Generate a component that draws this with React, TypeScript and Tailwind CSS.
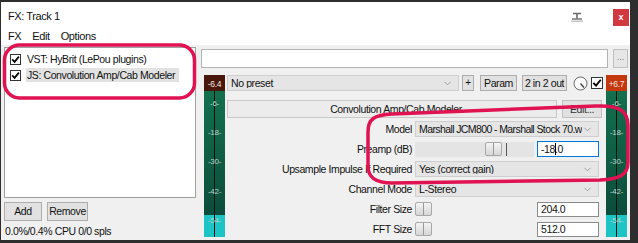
import { ChevronDown } from 'lucide-react';

const RED = '#e01252';

function CheckBox({ size = 11 }: { size?: number }) {
  return (
    <span
      className="shrink-0 border border-[#333] bg-white flex items-center justify-center"
      style={{ width: size, height: size }}
    >
      <svg width={size - 2} height={size - 2} viewBox="0 0 9 9">
        <path d="M1.2 4.4 L3.6 6.9 L7.9 1.6" stroke="#000" strokeWidth="1.7" fill="none" />
      </svg>
    </span>
  );
}

function Meter({ id, peak, peakColor }: { id: string; peak: string; peakColor: string }) {
  const ticks: [string, number][] = [
    ['-6-', 28],
    ['-18-', 57],
    ['-30-', 86],
    ['-42-', 116],
    ['-54-', 145],
  ];
  return (
    <svg width="21" height="162" className="block shrink-0">
      <defs>
        <linearGradient id={id} x1="0" y1="0" x2="0" y2="1">
          <stop offset="0" stopColor="#13704e" />
          <stop offset="1" stopColor="#0b4638" />
        </linearGradient>
      </defs>
      <rect x="0" y="16" width="21" height="146" fill={`url(#${id})`} />
      <rect x="0" y="140" width="21" height="22" fill="#1cc4c6" />
      <line x1="10.5" x2="10.5" y1="16" y2="162" stroke="#06140f" strokeWidth="1" />
      {ticks.map(([t, y]) => (
        <text
          key={t}
          x="10.5"
          y={y + 3}
          fontSize="8"
          textAnchor="middle"
          fill="#b9d4c7"
          letterSpacing="-0.3"
          fontFamily="'Liberation Sans',sans-serif"
        >
          {t}
        </text>
      ))}
      <rect x="0" y="0" width="21" height="16" fill={peakColor} />
      <text
        x="10.5"
        y="11.5"
        fontSize="8.5"
        textAnchor="middle"
        fill="#f3e6e0"
        letterSpacing="-0.3"
        fontFamily="'Liberation Sans',sans-serif"
      >
        {peak}
      </text>
    </svg>
  );
}

function Combo({ text, className = '' }: { text: string; className?: string }) {
  return (
    <div className={`flex items-center bg-[#e5e5e5] border border-[#cfcfcf] pl-[3px] pr-[5px] min-w-0 ${className}`}>
      <span className="flex-1 overflow-hidden whitespace-nowrap">{text}</span>
      <ChevronDown size={11} strokeWidth={1.4} color="#7a7a7a" className="shrink-0" />
    </div>
  );
}

function Thumb() {
  return (
    <span className="w-[17px] h-[14px] rounded-[2px] border border-[#a8a8a8] bg-gradient-to-b from-[#f4f4f4] to-[#d6d6d6] flex justify-center shrink-0">
      <span className="w-px h-full bg-[#9a9a9a]" />
    </span>
  );
}

function Row({ label, children }: { label: string; children: React.ReactNode }) {
  return (
    <div className="flex items-center h-[16px]">
      <span className="w-[185px] shrink-0 text-right whitespace-nowrap">{label}</span>
      <div className="ml-[3px] w-[184px] shrink-0 h-full flex items-center">{children}</div>
    </div>
  );
}

export default function App() {
  return (
    <div className="w-[638px] h-[243px] bg-[#2e2e2e] pt-[2px] pl-[1px] relative overflow-hidden text-[10.5px] tracking-[-0.4px] leading-none text-[#111] font-['Liberation_Sans',sans-serif]">
      <div className="w-[629px] h-[238px] bg-[#f0f0f0] flex flex-col">
        {/* title bar */}
        <div className="h-[26px] bg-white flex items-start pl-[7px]">
          <span className="mt-[9px] text-[11px]">FX: Track 1</span>
          <span className="flex-1" />
          <svg width="16" height="12" viewBox="0 0 16 12" className="mt-[9px] mr-[28px]">
            <path d="M4 2.5h8M8 2.5v5" stroke="#6a6a6a" strokeWidth="1.6" fill="none" />
            <path d="M3 8h10" stroke="#6a6a6a" strokeWidth="1.4" />
            <rect x="2" y="9.5" width="12" height="1.5" fill="#c4c4c4" />
          </svg>
          <div className="mt-[7px] mr-[1px] w-[16px] h-[17px] bg-[#d2393e] flex items-center justify-center text-white text-[9px] font-bold tracking-normal">
            x
          </div>
        </div>

        {/* menu */}
        <div className="h-[17px] bg-white flex items-center pl-[7px] gap-[11px] text-[11px]">
          <span>FX</span>
          <span>Edit</span>
          <span>Options</span>
        </div>

        <div className="flex-1 flex">
          {/* left column */}
          <div className="ml-[3px] w-[192px] shrink-0 flex flex-col">
            <div className="mt-[2px] h-[151px] bg-white border border-[#a0a0a0] pt-[5px] pl-[5px] flex flex-col gap-[4px]">
              <div className="flex items-center gap-[5px] h-[12px]">
                <CheckBox />
                <span className="pl-px whitespace-nowrap">VST: HyBrit (LePou plugins)</span>
              </div>
              <div className="flex items-center gap-[5px] h-[12px]">
                <CheckBox />
                <span className="bg-[#e2e2e2] pl-px pr-[4px] h-[14px] flex items-center whitespace-nowrap">
                  JS: Convolution Amp/Cab Modeler
                </span>
              </div>
            </div>
            <div className="mt-[4px] flex gap-[5px]">
              <button className="w-[38px] h-[19px] bg-[#e1e1e1] border border-[#adadad]">Add</button>
              <button className="w-[41px] h-[19px] bg-[#e1e1e1] border border-[#adadad]">Remove</button>
            </div>
            <div className="mt-[5px] pl-px whitespace-nowrap">0.0%/0.4% CPU 0/0 spls</div>
          </div>

          {/* right column */}
          <div className="ml-[5px] w-[427px] shrink-0 flex flex-col">
            <div className="mt-[4px] flex gap-[5px] h-[19px]">
              <div className="flex-1 bg-white border border-[#b4b4b4]" />
              <button className="w-[15px] bg-[#e6e6e6] border border-[#c0c0c0] text-[#777] text-[9px] pb-[2px] tracking-normal">
                ...
              </button>
            </div>

            <div className="mt-[7px] flex">
              <div className="ml-[3px] shrink-0">
                <Meter id="gl" peak="-6.4" peakColor="#4a170d" />
              </div>

              <div className="ml-[2px] w-[376px] shrink-0 flex flex-col">
                <div className="flex items-center h-[16px]">
                  <Combo text="No preset" className="w-[232px] h-[16px] shrink-0" />
                  <button className="ml-[3px] w-[12px] h-[16px] shrink-0 bg-[#e1e1e1] border border-[#adadad] text-[10px]">+</button>
                  <button className="ml-[6px] w-[37px] h-[16px] shrink-0 bg-[#e1e1e1] border border-[#adadad]">Param</button>
                  <button className="ml-[5px] w-[45px] h-[16px] shrink-0 bg-[#e1e1e1] border border-[#adadad] whitespace-nowrap">
                    2 in 2 out
                  </button>
                  <svg width="15" height="15" viewBox="0 0 15 15" className="ml-[6px] shrink-0">
                    <circle cx="7.5" cy="7.5" r="6.5" fill="#fafafa" stroke="#6a6a6a" />
                    <path d="M7.5 7.5 L11 11.5" stroke="#333" strokeWidth="1.2" />
                  </svg>
                  <span className="ml-[3px] shrink-0">
                    <CheckBox size={12} />
                  </span>
                </div>

                <div className="mt-[9px] flex h-[18px]">
                  <div className="w-[330px] shrink-0 bg-[#ececec] border border-[#c8c8c8] flex items-center justify-center pl-[8px] whitespace-nowrap">
                    Convolution Amp/Cab Modeler
                  </div>
                  <button className="ml-[5px] w-[40px] shrink-0 bg-[#e1e1e1] border border-[#c0c0c0] text-[#333]">Edit...</button>
                </div>

                <div className="mt-[3px] flex flex-col gap-[4px]">
                  <Row label="Model">
                    <Combo text="Marshall JCM800 - Marshall Stock 70.w" className="w-full h-[16px] tracking-[-0.6px]" />
                  </Row>
                  <Row label="Preamp (dB)">
                    <div className="w-[119px] h-[15px] shrink-0 bg-[#e4e4e4] flex items-center pl-[70px]">
                      <Thumb />
                      <span className="ml-[4px] w-px h-[13px] bg-[#555]" />
                    </div>
                    <div className="ml-[3px] w-[62px] h-[16px] shrink-0 bg-white border border-[#0078d7] flex items-center pl-[3px]">
                      -18<span className="w-px h-[12px] bg-black -mr-px" />.0
                    </div>
                  </Row>
                  <Row label="Upsample Impulse If Required">
                    <Combo text="Yes (correct gain)" className="w-full h-[16px]" />
                  </Row>
                  <Row label="Channel Mode">
                    <Combo text="L-Stereo" className="w-full h-[16px]" />
                  </Row>
                  <Row label="Filter Size">
                    <div className="w-[119px] h-[15px] shrink-0 flex items-center">
                      <Thumb />
                    </div>
                    <div className="ml-[3px] w-[62px] h-[15px] shrink-0 bg-white border border-[#8a8a8a] flex items-center pl-[3px]">
                      204.0
                    </div>
                  </Row>
                  <Row label="FFT Size">
                    <div className="w-[119px] h-[15px] shrink-0 flex items-center">
                      <Thumb />
                    </div>
                    <div className="ml-[3px] w-[62px] h-[15px] shrink-0 bg-white border border-[#8a8a8a] flex items-center pl-[3px]">
                      512.0
                    </div>
                  </Row>
                </div>
              </div>

              <div className="ml-[3px] shrink-0">
                <Meter id="gr" peak="+6.7" peakColor="#c3380c" />
              </div>
            </div>
          </div>
        </div>
      </div>

      {/* hand-drawn annotations */}
      <svg width="638" height="243" className="absolute inset-0 pointer-events-none">
        <rect x="4.5" y="45" width="190" height="53" rx="15" fill="none" stroke={RED} strokeWidth="3.5" />
        <path
          d="M368 132 C368 119 374 115 392 114 L596 106 C618 105 628 110 628 126 L628 162 C628 175 620 179 600 180 L392 183 C376 183 368 178 368 166 Z"
          fill="none"
          stroke={RED}
          strokeWidth="3.5"
        />
      </svg>
    </div>
  );
}
